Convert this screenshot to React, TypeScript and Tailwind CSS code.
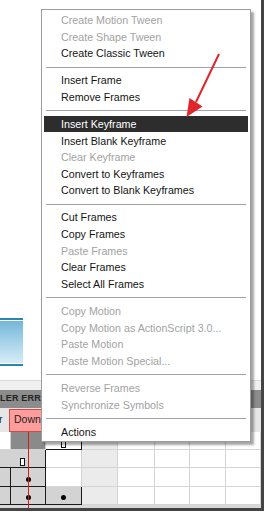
import React from "react";

type Item = { label: string; disabled?: boolean; active?: boolean } | "sep";

const menu: Item[] = [
  { label: "Create Motion Tween", disabled: true },
  { label: "Create Shape Tween", disabled: true },
  { label: "Create Classic Tween" },
  "sep",
  { label: "Insert Frame" },
  { label: "Remove Frames" },
  "sep",
  { label: "Insert Keyframe", active: true },
  { label: "Insert Blank Keyframe" },
  { label: "Clear Keyframe", disabled: true },
  { label: "Convert to Keyframes" },
  { label: "Convert to Blank Keyframes" },
  "sep",
  { label: "Cut Frames" },
  { label: "Copy Frames" },
  { label: "Paste Frames", disabled: true },
  { label: "Clear Frames" },
  { label: "Select All Frames" },
  "sep",
  { label: "Copy Motion", disabled: true },
  { label: "Copy Motion as ActionScript 3.0...", disabled: true },
  { label: "Paste Motion", disabled: true },
  { label: "Paste Motion Special...", disabled: true },
  "sep",
  { label: "Reverse Frames", disabled: true },
  { label: "Synchronize Symbols", disabled: true },
  "sep",
  { label: "Actions" },
];

// cell kinds: w = white grid, g = light gray keyframe span, d = dark, s = shaded column
type Cell = { kind: string; span?: number; mark?: "hollow" | "dot"; black?: boolean };

const rows: Cell[][] = [
  [
    { kind: "w0" },
    { kind: "d" },
    { kind: "w", black: true, mark: "hollow" },
    { kind: "s" },
    { kind: "w" },
    { kind: "w" },
    { kind: "w" },
    { kind: "w" },
  ],
  [
    { kind: "g", span: 2, mark: "hollow", black: true },
    { kind: "w" },
    { kind: "s" },
    { kind: "w" },
    { kind: "w" },
    { kind: "w" },
    { kind: "w" },
  ],
  [
    { kind: "g", black: true },
    { kind: "g", black: true, mark: "dot" },
    { kind: "w" },
    { kind: "s" },
    { kind: "w" },
    { kind: "w" },
    { kind: "w" },
    { kind: "w" },
  ],
  [
    { kind: "g", black: true },
    { kind: "g", black: true, mark: "dot" },
    { kind: "g", black: true, mark: "dot" },
    { kind: "s" },
    { kind: "w" },
    { kind: "w" },
    { kind: "w" },
    { kind: "w" },
  ],
];

function GridCell({ cell }: { cell: Cell }) {
  const bg =
    cell.kind === "d" ? "bg-[#8a8a8a]" : cell.kind === "g" ? "bg-[#d3d3d3]" : cell.kind === "s" ? "bg-[#ebebeb]" : "bg-white";
  const border = cell.black ? "border-[#1a1a1a]" : "border-[#d4d4d4]";
  return (
    <div
      className={`${bg} ${border} border-r border-b flex items-end justify-center pb-[2px] ${cell.span === 2 ? "col-span-2" : ""}`}
    >
      {cell.mark === "hollow" && <div className="w-[5px] h-[8px] border border-[#111] bg-white mb-[-1px]" />}
      {cell.mark === "dot" && <div className="w-[5px] h-[5px] rounded-full bg-black mb-[2px]" />}
    </div>
  );
}

export default function App() {
  return (
    <div className="relative w-[266px] h-[515px] bg-white overflow-hidden" style={{ fontFamily: '"Liberation Sans", Arial, sans-serif' }}>
      {/* screenshot frame */}
      <div className="w-[264px] h-[511px] border-r-[3px] border-b-[3px] border-[#444] flex flex-col">
        <div className="h-[318px] shrink-0" />
        <div className="w-[23px] h-[48px] shrink-0 flex flex-col">
          <div className="h-[2px] bg-[#2f86ad]" />
          <div className="h-[1px] bg-white" />
          <div className="flex-1 bg-gradient-to-b from-[#74b6d8] via-[#a6d3ea] to-[#d6ecf7]" />
          <div className="h-[1px] bg-white" />
          <div className="h-[2px] bg-[#2f86ad]" />
        </div>
        <div className="h-[14px] shrink-0" />
        <div className="h-[10px] shrink-0 bg-[#f0f0f0] border-t border-[#dcdcdc]" />
        <div className="h-[18px] shrink-0 bg-[#8c8c8c] flex items-center overflow-hidden">
          <span className="text-[9px] font-bold text-[#222] tracking-[0.2px] whitespace-nowrap">LER ERRORS</span>
        </div>
        <div className="h-[24px] shrink-0 bg-[#e6e6e6] flex items-center">
          <span className="text-[10.5px] text-[#222] w-[10px] ml-[-1px]">r</span>
          <div className="h-[23px] w-[46px] bg-[#ff9d9d] border border-[#d04848] flex items-center pl-[4px] text-[10.5px] text-[#222]">
            Down
          </div>
        </div>
        <div className="grid grid-cols-[11px_35px_36px_36px_37px_35px_36px_35px] grid-rows-[18px_18px_19px_18px] shrink-0">
          {rows.map((r, i) => r.map((c, j) => <GridCell key={`${i}-${j}`} cell={c} />))}
        </div>
        <div className="flex-1 bg-[#d8d8d8]" />
      </div>

      {/* playhead line */}
      <div className="absolute left-[28px] top-[432px] w-[1px] h-[76px] bg-[#d41c1c]" />

      {/* context menu */}
      <div className="absolute left-[41px] top-[9px] w-[210px] bg-white border border-[#9c9c9c] pt-[1.7px] pb-[1px] px-[2px] shadow-[3px_3px_2px_rgba(0,0,0,0.35)] text-[10.7px]">
        {menu.map((it, i) =>
          it === "sep" ? (
            <div key={i} className="pt-[5px] pb-[4.3px] px-[2px]">
              <div className="h-[1px] bg-[#a3a3a3]" />
            </div>
          ) : (
            <div
              key={i}
              className={`h-[16.67px] flex items-center pl-[17px] whitespace-nowrap ${
                it.active ? "bg-[#2d2d2d] text-white" : it.disabled ? "text-[#a2a2a2]" : "text-[#141414]"
              }`}
            >
              {it.label}
            </div>
          )
        )}
      </div>

      {/* red annotation arrow */}
      <svg className="absolute left-0 top-0" width="266" height="515">
        <line x1="219" y1="54" x2="196" y2="102" stroke="#e0262a" strokeWidth="2" />
        <polygon points="186.5,117 189.5,98 202.5,106.5" fill="#e0262a" />
      </svg>
    </div>
  );
}
